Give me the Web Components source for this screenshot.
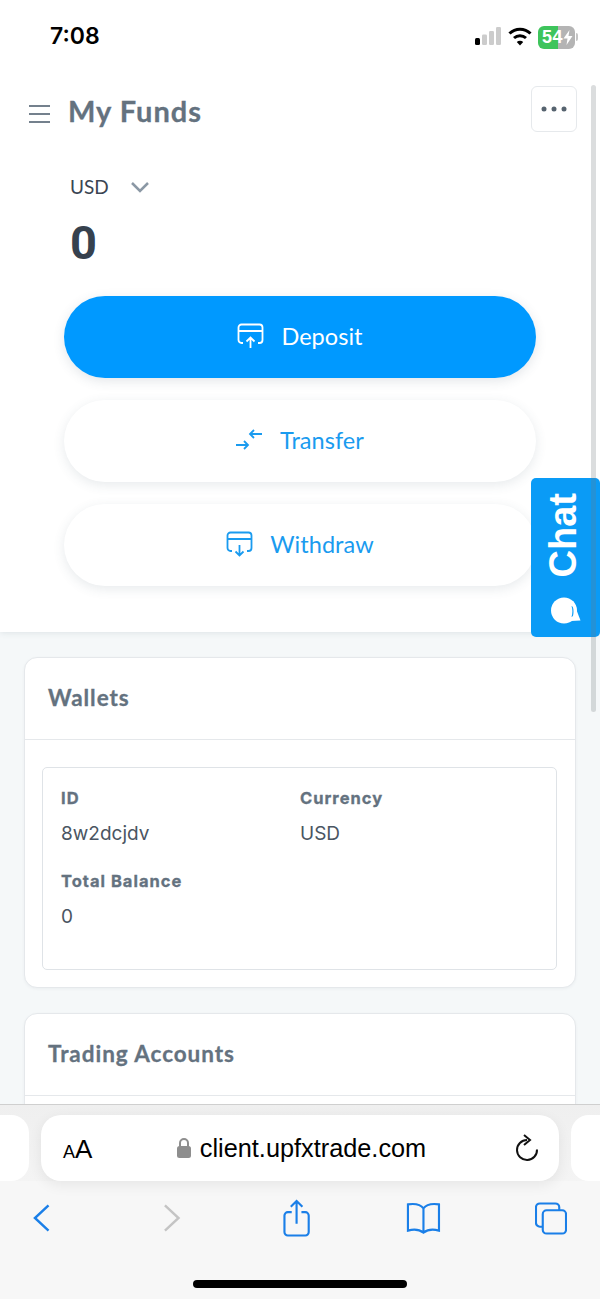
<!DOCTYPE html>
<html><head><meta charset="utf-8"><style>
html,body{margin:0;padding:0;background:#fff}
body{width:600px;height:1299px;overflow:hidden}
</style></head><body>
<phone-app></phone-app>
<script>
const def=(n,html)=>customElements.define(n,class extends HTMLElement{constructor(){super();this.attachShadow({mode:'open'}).innerHTML=html}});
def('status-bar',`<style>
:host{display:flex;height:68px;box-sizing:border-box;background:#fff;padding:23px 0 0 50px;justify-content:space-between;font-family:Inter,"Liberation Sans",sans-serif}
.t{font:600 23px/27px Inter,sans-serif;color:#000}
.r{display:flex;gap:6px;align-items:flex-start;padding:4px 25px 0 0}
svg{display:block}
.b{height:23px;border-radius:6px;margin-top:-1px;background:linear-gradient(90deg,#3ec45c 0 55%,#b4b4b4 55%);color:#fff;font:700 18px/23px "Liberation Sans",sans-serif;padding-left:4px;box-sizing:border-box;position:relative;width:37px;white-space:nowrap;letter-spacing:.5px}
.b::after{content:"";position:absolute;left:38px;top:7px;width:2px;height:8px;background:#c4c4c4;border-radius:0 2px 2px 0}
</style><div class="t">7:08</div><div class="r">
<svg width="27" height="18" viewBox="0 0 27 18"><rect x="0" y="11" width="5" height="7" rx="1.5" fill="#000"/><rect x="7" y="7.5" width="5" height="10.500" rx="1.2" fill="#ccc"/><rect x="14" y="4" width="5" height="14" rx="1.2" fill="#ccc"/><rect x="21" y="0" width="5" height="18" rx="1.2" fill="#ccc"/></svg>
<svg width="24" height="19" viewBox="0 0 24 19" fill="none" stroke="#000" stroke-width="3"><path d="M1.500 6.500a15 15 0 0 1 21 0"/><path d="M6 11a9 9 0 0 1 12 0"/><path d="M12 18.500l-3.200-3.400a4.600 4.600 0 0 1 6.400 0z" fill="#000" stroke="none"/></svg>
<div class="b">54<svg style="position:absolute;left:25px;top:4px" width="10" height="15" viewBox="0 0 10 15"><path d="M6.500 0L0.500 8.500H4.500L3.500 15L9.500 6H5.500z" fill="#fff"/></svg></div>
</div>`);
def('page-header',`<style>
:host{display:flex;align-items:center;padding:18px 23px 0 29px;height:46px;background:#fff}
svg{display:block;margin-top:9px}
.m svg{margin:0}
h1{margin:3px 0 0 18px;flex:1;font:700 29px/46px Lato,sans-serif;color:#64727f;letter-spacing:1px;-webkit-text-stroke:.3px #64727f}
.m{width:46px;height:46px;box-sizing:border-box;border:1.500px solid #e6e9ec;border-radius:6px;display:flex;align-items:center;justify-content:center}
</style><svg width="21" height="18" viewBox="0 0 21 18" fill="none" stroke="#74818d" stroke-width="2"><path d="M0 1h21M0 9h21M0 17h21"/></svg><h1>My Funds</h1><div class="m"><svg width="26" height="6" viewBox="0 0 26 6" fill="#56636f"><circle cx="3" cy="3" r="2.500"/><circle cx="13" cy="3" r="2.500"/><circle cx="23" cy="3" r="2.500"/></svg></div>`);
def('balance-head',`<style>
:host{display:block;padding:42px 0 0 70px}
.c{display:flex;align-items:center;gap:22px;font:400 19px/26px Lato,sans-serif;color:#3a4552}
.v{font:700 47px/56px Roboto,sans-serif;color:#36414e;margin-top:15px}
</style><div class="c">USD<svg width="18" height="11" viewBox="0 0 18 11" fill="none" stroke="#8b98a5" stroke-width="2.500"><path d="M1 1l8 8 8-8"/></svg></div><div class="v">0</div>`);
def('action-button',`<style>
:host{display:flex;height:82px;box-sizing:border-box;padding-bottom:2px;border-radius:41px;align-items:center;justify-content:center;gap:17px;background:#fff;color:#1a9bef;box-shadow:0 3px 12px rgba(60,80,100,.12);font:400 23.500px/30px Lato,sans-serif;letter-spacing:.05px}
:host([primary]){background:#0099ff;color:#fff;box-shadow:0 3px 12px rgba(60,80,100,.14)}
::slotted(svg){display:block}
</style><slot name="i"></slot><slot></slot>`);
def('funds-top',`<style>
:host{display:block;background:#fff;height:564px;box-sizing:border-box;box-shadow:0 1px 6px rgba(60,80,100,.12);clip-path:inset(0 0 -20px 0);position:relative}
.a{display:flex;flex-direction:column;gap:22px;padding:0 64px;margin-top:25px}
</style><page-header></page-header><balance-head></balance-head><div class="a"><slot></slot></div>`);
def('data-field',`<style>
:host{display:block;height:83px;box-sizing:border-box}
b{display:block;font:700 16.500px/22px Inter,sans-serif;color:#64727f;letter-spacing:1px;-webkit-text-stroke:.3px #64727f}
span{display:block;font:400 19px/26px Inter,sans-serif;color:#4a5562;margin-top:12px}
</style><b><slot name="k"></slot></b><span><slot></slot></span>`);
def('info-card',`<style>
:host{display:block;background:#fff;border:1.500px solid #e5e8eb;border-radius:13px;box-sizing:border-box;box-shadow:0 1px 3px rgba(60,80,100,.06)}
h2{margin:0;height:82px;box-sizing:border-box;border-bottom:1.500px solid #e5e8eb;padding:0 23px;font:700 22.500px/80px Lato,sans-serif;color:#64727f;letter-spacing:.95px;-webkit-text-stroke:.3px #64727f}
.b{padding:27px 18px 17px 17px}
</style><h2><slot name="t"></slot></h2><div class="b"><slot></slot></div>`);
def('inner-box',`<style>
:host{display:grid;grid-template-columns:239px 1fr;align-content:start;border:1.500px solid #dfe3e7;border-radius:5px;height:203px;box-sizing:border-box;padding:19px 18px 0}
</style><slot></slot>`);
def('chat-tab',`<style>
:host{position:absolute;left:531px;top:478px;width:69px;height:159px;background:#0a9bf6;border-radius:5px;display:flex;flex-direction:column;align-items:center;justify-content:flex-end;color:#fff;padding:0 4px 13px 0;box-sizing:border-box;gap:20px}
span{writing-mode:vertical-rl;transform:rotate(180deg);font:700 38px/39px "Liberation Sans",sans-serif;}
svg{display:block;margin-left:4px}
</style><span>Chat</span><svg width="30" height="27" viewBox="0 0 30 27"><path d="M22 4L29.500 23.500 20 24z" fill="#fff"/><circle cx="13" cy="13.500" r="13" fill="#fff"/><path d="M20.500 9c1.200 3 1.200 7.500 0 11 1.500-.5 2-2 2-5.500s-.5-5-2-5.500z" fill="#0a9bf6"/></svg>`);
def('url-pill',`<style>
:host{flex:none;width:518px;height:66px;background:#fff;border-radius:20px;display:flex;align-items:center;box-shadow:0 4px 14px rgba(0,0,0,.07);font-family:"Liberation Sans",sans-serif;color:#000;position:relative;justify-content:center}
.aa{position:absolute;left:22px;top:20px;line-height:28px;font-size:26px}.aa small{font-size:18px}
.u{display:flex;align-items:center;gap:9px;font-size:25.300px;margin-left:3px}
.r{position:absolute;right:20px;top:19px}
svg{display:block}
</style><div class="aa"><small>A</small>A</div><div class="u"><svg width="14" height="20" viewBox="0 0 14 20"><rect x="0" y="8" width="14" height="12" rx="2.500" fill="#8e8e8e"/><path d="M3 9V5a4 4 0 0 1 8 0v4" fill="none" stroke="#8e8e8e" stroke-width="2"/></svg>client.upfxtrade.com</div>
<svg class="r" width="24" height="28" viewBox="0 0 24 28" fill="none" stroke="#111" stroke-width="2"><path d="M12 6a10 10 0 1 0 10 9.500"/><path d="M9 1l6 5-6 5"/></svg>`);
def('safari-bar',`<style>
:host{position:absolute;left:0;top:1104px;width:600px;height:195px;background:#f7f7f7;border-top:1.500px solid #cfcfcf;box-sizing:border-box;display:flex;flex-direction:column}
.p{display:flex;justify-content:center;gap:12px;padding-top:10px;background:linear-gradient(#efefef,#f4f4f4);height:66px}
.s{flex:none;width:58px;height:66px;background:#fff;border-radius:18px;margin:0}
.n{display:flex;align-items:center;justify-content:space-between;padding:0 33px;margin-top:12px;height:50px}
svg{display:block}
.h{width:214px;height:8px;background:#000;border-radius:4px;margin:37px auto 0}
</style><div class="p"><div class="s"></div><url-pill></url-pill><div class="s"></div></div>
<div class="n">
<svg width="18" height="30" viewBox="0 0 18 30" fill="none" stroke="#1a7fe8" stroke-width="2.500"><path d="M16 2L2 15l14 13"/></svg>
<svg style="margin-left:113px" width="18" height="30" viewBox="0 0 18 30" fill="none" stroke="#c4c4c4" stroke-width="2.500"><path d="M2 2l14 13L2 28"/></svg>
<svg style="margin-left:102px" width="28" height="38" viewBox="0 0 28 38" fill="none" stroke="#1a7fe8" stroke-width="2.200"><path d="M9 13H5a3.500 3.500 0 0 0-3.500 3.500v17A3.500 3.500 0 0 0 5 37h18a3.500 3.500 0 0 0 3.500-3.500v-17A3.500 3.500 0 0 0 23 13h-4"/><path d="M14 25V2M8 7.500L14 1.500l6 6"/></svg>
<svg style="margin-left:96px" width="36" height="32" viewBox="0 0 36 32" fill="none" stroke="#1a7fe8" stroke-width="2.200"><path d="M18 6C15 2 9 1 2 2v27c7-2 12-1 16 2 4-3 9-4 16-2V2c-7-1-13 0-16 4zM18 6v25"/></svg>
<svg style="margin-left:94px" width="33" height="33" viewBox="0 0 33 33" fill="none" stroke="#1a7fe8" stroke-width="2.200"><rect x="8" y="8" width="24" height="24" rx="4"/><path d="M8 25H5a4 4 0 0 1-4-4V5a4 4 0 0 1 4-4h16a4 4 0 0 1 4 4v3"/></svg>
</div><div class="h"></div>`);
def('phone-app',`<style>
:host{display:flex;flex-direction:column;width:600px;height:1299px;position:relative;overflow:hidden;background:#f5f8f9}
.cards{display:flex;flex-direction:column;gap:25px;padding:25px 24px 0}
.sb{position:absolute;left:591px;top:85px;width:5px;height:627px;background:#6f767d;opacity:.25;border-radius:3px}
svg{display:block}
</style>
<status-bar></status-bar>
<funds-top>
<action-button primary><svg slot="i" width="27" height="26" viewBox="0 0 27 26" fill="none" stroke="#fff" stroke-width="1.800"><path d="M6 20H4.500a3 3 0 0 1-3-3V4.500a3 3 0 0 1 3-3h18a3 3 0 0 1 3 3V17a3 3 0 0 1-3 3H21M1.500 8h24M13.500 25V15M9.500 18.500l4-4 4 4"/></svg>Deposit</action-button>
<action-button><svg slot="i" width="27" height="22" viewBox="0 0 27 22" fill="none" stroke="#1a9bef" stroke-width="1.800"><path d="M0 16h12M8 12l4 4-4 4M26 5H14M18 1l-4 4 4 4"/></svg>Transfer</action-button>
<action-button><svg slot="i" width="27" height="26" viewBox="0 0 27 26" fill="none" stroke="#1a9bef" stroke-width="1.800"><path d="M6 20H4.500a3 3 0 0 1-3-3V4.500a3 3 0 0 1 3-3h18a3 3 0 0 1 3 3V17a3 3 0 0 1-3 3H21M1.500 8h24M13.500 14v10M9.500 20.500l4 4 4-4"/></svg>Withdraw</action-button>
</funds-top>
<div class="cards">
<info-card><span slot="t">Wallets</span>
<inner-box>
<data-field><span slot="k">ID</span>8w2dcjdv</data-field>
<data-field><span slot="k">Currency</span>USD</data-field>
<data-field><span slot="k">Total Balance</span>0</data-field>
</inner-box></info-card>
<info-card><span slot="t">Trading Accounts</span></info-card>
</div>
<chat-tab></chat-tab>
<div class="sb"></div>
<safari-bar></safari-bar>`);
</script></body></html>
